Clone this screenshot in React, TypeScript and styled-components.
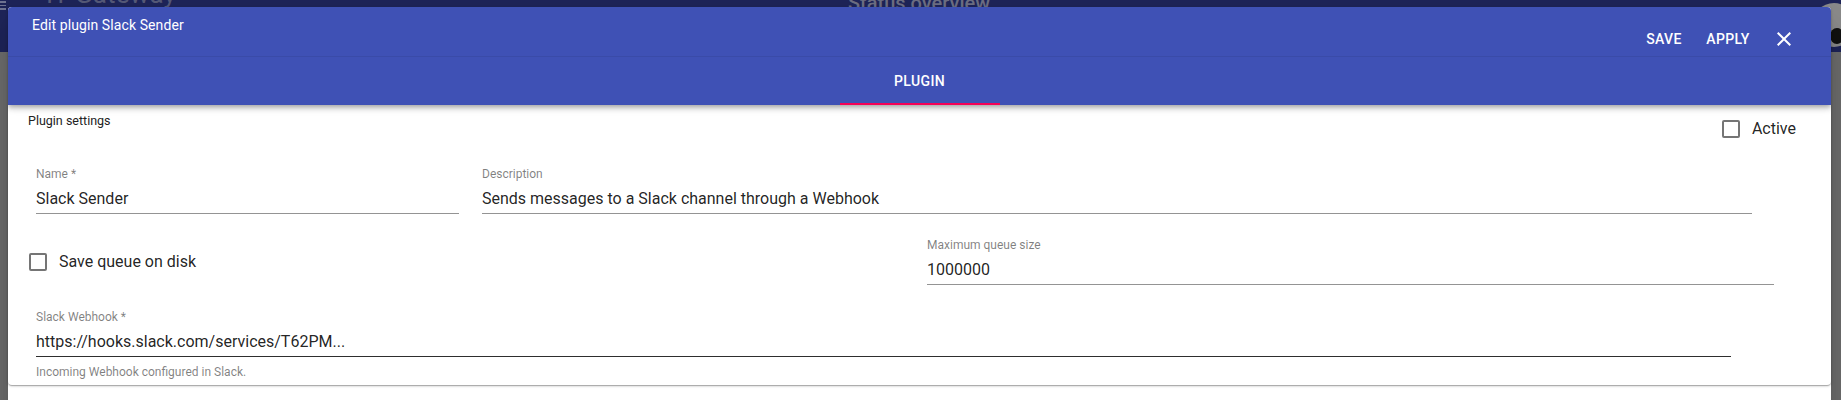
import React from 'react'
import styled, { createGlobalStyle } from 'styled-components'

/**
 * Global
 */

const GlobalStyle = createGlobalStyle`
	html, body {
		margin: 0;
		padding: 0;
	}
	body {
		font-family: Roboto, 'Liberation Sans', Arial, sans-serif;
		-webkit-font-smoothing: antialiased;
	}
`

/**
 * Page behind the modal (dimmed)
 */

const Screen = styled.div`
	position: relative;
	width: 1841px;
	height: 400px;
	overflow: hidden;
	background: #6c6c6c;
`

const BackBar = styled.div`
	height: 52px;
	background: #1e2458;
	display: flex;
	align-items: flex-start;
	position: relative;
`

const Burger = styled.div`
	width: 6px;
	margin-top: 1px;
	display: flex;
	flex-direction: column;
	gap: 2px;
	& span {
		height: 1.5px;
		background: #6f7391;
	}
`

const BackTitle = styled.div`
	margin-left: 40px;
	margin-top: -21px;
	font-size: 26px;
	color: #555977;
	letter-spacing: 0.2px;
`

const BackCenter = styled.div`
	position: absolute;
	left: 848px;
	top: -9px;
	font-size: 20px;
	font-weight: 500;
	color: #6c6e82;
`

const Avatar = styled.div`
	position: absolute;
	left: 1812px;
	top: 3px;
	width: 44px;
	height: 44px;
	border-radius: 50%;
	background: #8a8a8a;
	&::after {
		content: '';
		position: absolute;
		left: 18px;
		top: 25px;
		width: 14px;
		height: 16px;
		border-radius: 50%;
		background: #111;
	}
`

/**
 * Dialog
 */

const Dialog = styled.div`
	position: absolute;
	left: 8px;
	top: 7px;
	width: 1823px;
	height: 420px;
	background: #fff;
	border-radius: 4px;
	box-shadow: 0 11px 15px -7px rgba(0, 0, 0, 0.2),
		0 24px 38px 3px rgba(0, 0, 0, 0.14);
`

const Card = styled.div`
	height: 378px;
	border-radius: 4px;
	overflow: hidden;
	background: #fff;
	box-shadow: 0 1px 3px 0 rgba(0, 0, 0, 0.2), 0 1px 1px 0 rgba(0, 0, 0, 0.14),
		0 2px 1px -1px rgba(0, 0, 0, 0.12);
	display: flex;
	flex-direction: column;
`

const AppBar = styled.div`
	background: #3f51b5;
	color: #fff;
	position: relative;
	z-index: 1;
	box-shadow: 0 2px 4px -1px rgba(0, 0, 0, 0.2), 0 4px 5px 0 rgba(0, 0, 0, 0.14),
		0 1px 10px 0 rgba(0, 0, 0, 0.12);
`

const Toolbar = styled.div`
	height: 50px;
	padding: 0 23px 0 24px;
	display: flex;
	justify-content: space-between;
	align-items: flex-start;
	border-bottom: 1px solid rgba(0, 0, 0, 0.07);
	box-sizing: border-box;
`

const Title = styled.div`
	font-size: 14px;
	line-height: 16px;
	margin-top: 10px;
	font-weight: 400;
	letter-spacing: 0.1px;
`

const Actions = styled.div`
	display: flex;
	align-items: center;
	height: 36px;
	margin-top: 14px;
`

const TextButton = styled.button`
	min-width: 64px;
	height: 36px;
	padding: 6px 8px;
	border: 0;
	background: transparent;
	color: #fff;
	font-family: Roboto, 'Liberation Sans', Arial, sans-serif;
	font-size: 14px;
	font-weight: 500;
	letter-spacing: 0.4px;
	text-transform: uppercase;
	cursor: pointer;
`

const IconButton = styled.button`
	width: 48px;
	height: 36px;
	border: 0;
	padding: 0;
	background: transparent;
	display: flex;
	align-items: center;
	justify-content: center;
	cursor: pointer;
`

const Tabs = styled.div`
	height: 48px;
	display: flex;
	justify-content: center;
`

const Tab = styled.div<{ $active?: boolean }>`
	width: 160px;
	display: flex;
	align-items: center;
	justify-content: center;
	font-size: 14px;
	font-weight: 500;
	letter-spacing: 0.4px;
	text-transform: uppercase;
	box-sizing: border-box;
	padding-top: 2px;
	border-bottom: 2px solid ${(p) => (p.$active ? '#f50057' : 'transparent')};
`

/**
 * Form
 */

const Body = styled.div`
	padding: 0 35px 0 0;
	color: rgba(0, 0, 0, 0.87);
`

const HeadRow = styled.div`
	display: flex;
	justify-content: space-between;
	align-items: flex-start;
	padding-left: 20px;
`

const Caption = styled.div`
	margin-top: 8px;
	font-size: 12.5px;
	line-height: 16px;
	color: #222;
`

const CheckLabel = styled.label<{ $top?: number }>`
	display: flex;
	align-items: center;
	gap: 12px;
	margin-top: ${(p) => p.$top ?? 0}px;
	font-size: 16px;
	line-height: 19px;
	color: rgba(0, 0, 0, 0.87);
`

const Box = styled.span`
	width: 18px;
	height: 18px;
	border: 2px solid #757575;
	border-radius: 2px;
	box-sizing: border-box;
	flex: none;
`

const Row = styled.div<{ $cols: string; $top: number; $pl: number; $pr?: number }>`
	display: grid;
	grid-template-columns: ${(p) => p.$cols};
	column-gap: 23px;
	align-items: center;
	margin-top: ${(p) => p.$top}px;
	padding-left: ${(p) => p.$pl}px;
	padding-right: ${(p) => Math.max((p.$pr ?? 0) - 35, 0)}px;
`

const Field = styled.div`
	display: flex;
	flex-direction: column;
`

const Label = styled.div`
	font-size: 12px;
	line-height: 14px;
	color: rgba(0, 0, 0, 0.5);
`

const Input = styled.div<{ $strong?: boolean }>`
	margin-top: 8px;
	padding-bottom: 5px;
	font-size: 16px;
	line-height: 19px;
	color: rgba(0, 0, 0, 0.87);
	border-bottom: 1px solid
		${(p) => (p.$strong ? 'rgba(0, 0, 0, 0.82)' : 'rgba(0, 0, 0, 0.42)')};
`

const Helper = styled.div`
	margin-top: 8px;
	font-size: 12px;
	line-height: 14px;
	color: rgba(0, 0, 0, 0.5);
`

const CloseIcon = () => (
	<svg width="24" height="24" viewBox="0 0 24 24" fill="#fff">
		<path d="M19 6.41 17.59 5 12 10.59 6.41 5 5 6.41 10.59 12 5 17.59 6.41 19 12 13.41 17.59 19 19 17.59 13.41 12z" />
	</svg>
)

export default function App() {
	return (
		<>
			<GlobalStyle />
			<Screen>
				<BackBar>
					<Burger>
						<span />
						<span />
						<span />
					</Burger>
					<BackTitle>IT Gateway</BackTitle>
					<BackCenter>Status overview</BackCenter>
					<Avatar />
				</BackBar>

				<Dialog>
					<Card>
						<AppBar>
							<Toolbar>
								<Title>Edit plugin Slack Sender</Title>
								<Actions>
									<TextButton>Save</TextButton>
									<TextButton>Apply</TextButton>
									<IconButton aria-label="close">
										<CloseIcon />
									</IconButton>
								</Actions>
							</Toolbar>
							<Tabs>
								<Tab $active>Plugin</Tab>
							</Tabs>
						</AppBar>

						<Body>
							<HeadRow>
								<Caption>Plugin settings</Caption>
								<CheckLabel $top={14}>
									<Box />
									Active
								</CheckLabel>
							</HeadRow>

							<Row $cols="423px 1270px" $top={29} $pl={28}>
								<Field>
									<Label>Name *</Label>
									<Input>Slack Sender</Input>
								</Field>
								<Field>
									<Label>Description</Label>
									<Input>Sends messages to a Slack channel through a Webhook</Input>
								</Field>
							</Row>

							<Row $cols="1fr 847px" $top={24} $pl={21} $pr={57}>
								<CheckLabel>
									<Box />
									Save queue on disk
								</CheckLabel>
								<Field>
									<Label>Maximum queue size</Label>
									<Input>1000000</Input>
								</Field>
							</Row>

							<Row $cols="1695px" $top={25} $pl={28}>
								<Field>
									<Label>Slack Webhook *</Label>
									<Input $strong>https://hooks.slack.com/services/T62PM...</Input>
									<Helper>Incoming Webhook configured in Slack.</Helper>
								</Field>
							</Row>
						</Body>
					</Card>
				</Dialog>
			</Screen>
		</>
	)
}
